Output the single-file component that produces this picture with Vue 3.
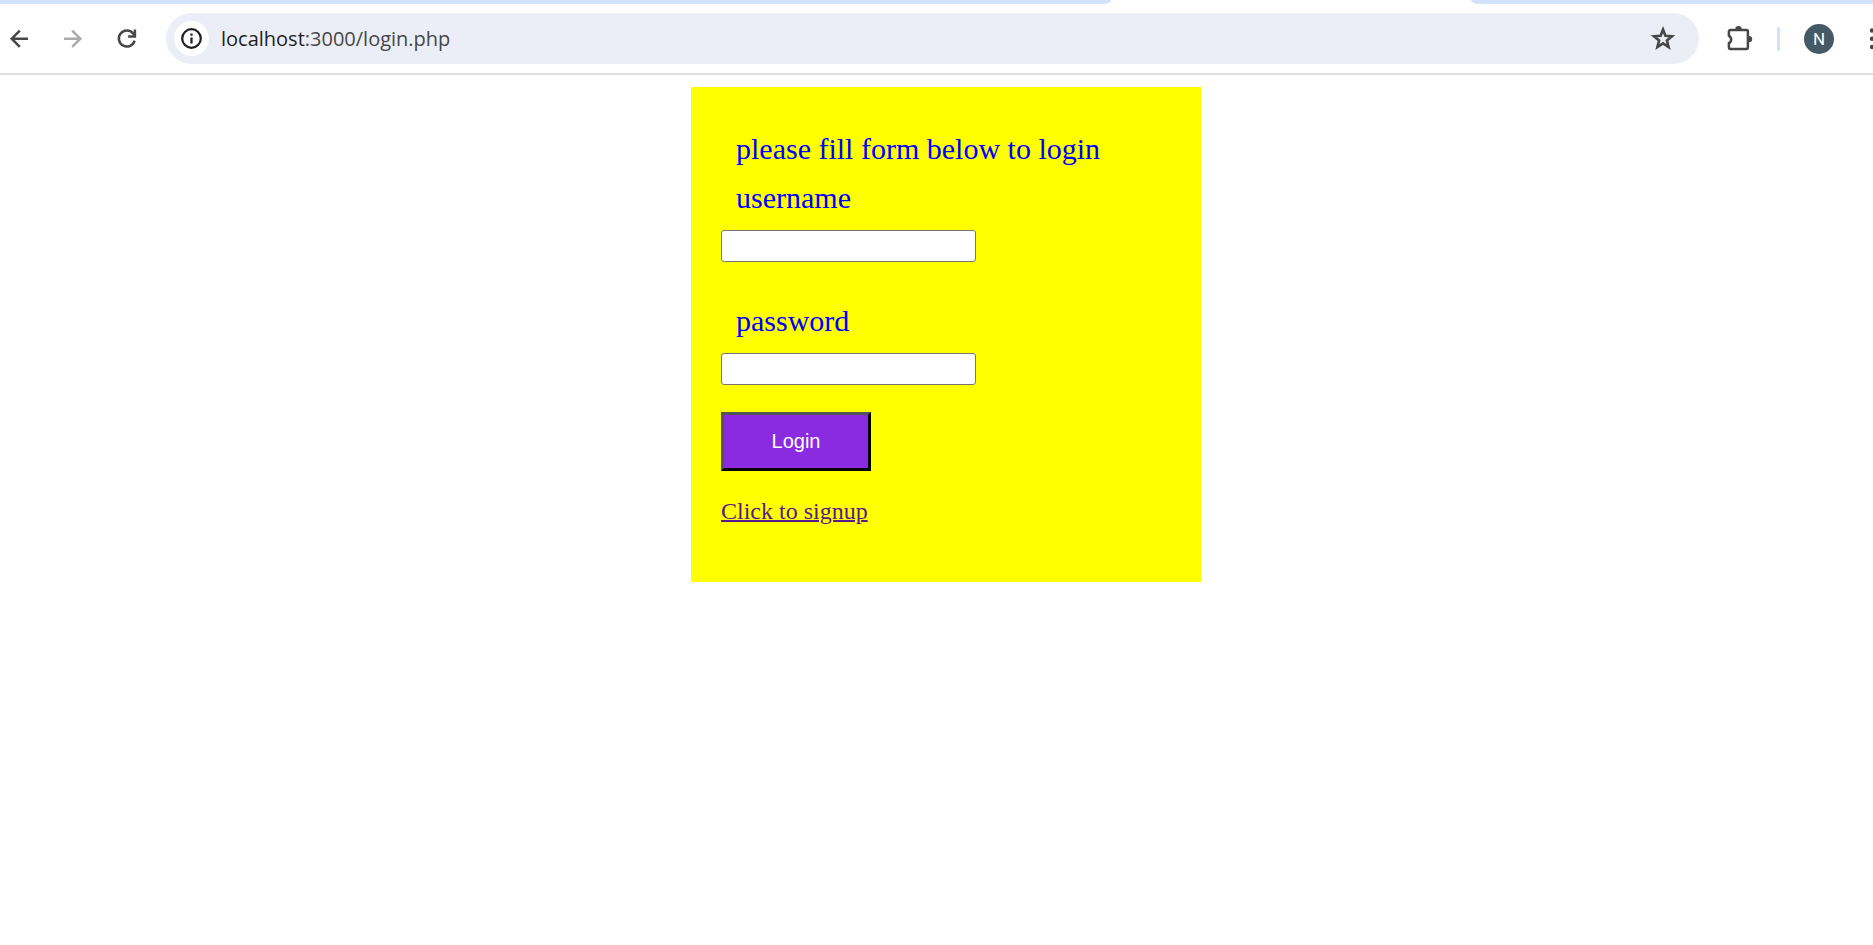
<script setup>
import { ref } from 'vue'

const username = ref('')
const password = ref('')
</script>

<template>
  <div class="window">
    <header class="chrome">
      <div class="tabs">
        <div class="tab-left"></div>
        <div class="tab-right"></div>
      </div>
      <div class="toolbar">
        <nav class="nav" aria-label="Navigation">
          <button type="button" class="icon-btn" aria-label="Back">
            <svg viewBox="0 0 24 24" width="24" height="24" fill="none" stroke="#474747" stroke-width="2.5">
              <path d="M21 11.7H5M12.8 3.6 4.7 11.7l8.1 8.1" />
            </svg>
          </button>
          <button type="button" class="icon-btn" aria-label="Forward">
            <svg viewBox="0 0 24 24" width="24" height="24" fill="none" stroke="#ababab" stroke-width="2.5">
              <path d="M3 11.7h16M11.2 3.6l8.1 8.1-8.1 8.1" />
            </svg>
          </button>
          <button type="button" class="icon-btn" aria-label="Reload">
            <svg viewBox="0 0 24 24" width="24" height="24" fill="none" stroke="#474747" stroke-width="2.5">
              <path d="M19.6 13.6A8 8 0 1 1 18 6.4L20 8.8" />
              <path d="M19.9 2.6v6.9h-6.8" />
            </svg>
          </button>
        </nav>
        <div class="omnibox">
          <button type="button" class="info" aria-label="Site information">
            <svg viewBox="0 0 21 21" width="21" height="21" fill="none" stroke="#1f1f1f">
              <circle cx="10.5" cy="10.5" r="9.3" stroke-width="2.2" />
              <path d="M10.5 9.4v6M10.5 5.4v2.3" stroke-width="2.2" />
            </svg>
          </button>
          <div class="url"><span class="host">localhost</span>:3000/login.php</div>
          <button type="button" class="icon-btn" aria-label="Bookmark">
            <svg viewBox="0 0 26 26" width="26" height="26" fill="none" stroke="#474747" stroke-width="2.6">
              <path d="M13 3.6l2.4 6.1 6.6.5-5.1 4.2 1.7 6.6L13 17.4 7.4 21l1.7-6.6L4 10.2l6.6-.5z" />
            </svg>
          </button>
        </div>
        <button type="button" class="icon-btn ext" aria-label="Extensions">
          <svg viewBox="0 0 28 28" width="28" height="28">
            <path
              d="M4.5 4.9h15.8a1.6 1.6 0 0 1 1.6 1.6v15.8a1.6 1.6 0 0 1-1.6 1.6H4.5a1.6 1.6 0 0 1-1.6-1.6V18a4 4 0 0 0 0-7.2V6.5a1.6 1.6 0 0 1 1.6-1.6z"
              fill="none"
              stroke="#474747"
              stroke-width="2.5"
            />
            <path d="M9.3 4.2a3.2 3.2 0 0 1 6.4 0zM23 10.9a3.2 3.2 0 0 1 0 6.4z" fill="#474747" />
          </svg>
        </button>
        <div class="divider"></div>
        <button type="button" class="avatar" aria-label="Profile">N</button>
        <button type="button" class="icon-btn" aria-label="Menu">
          <svg viewBox="0 0 16 24" width="16" height="24" fill="#474747">
            <circle cx="8" cy="3.5" r="2.2" />
            <circle cx="8" cy="11.8" r="2.2" />
            <circle cx="8" cy="20" r="2.2" />
          </svg>
        </button>
      </div>
    </header>

    <main class="page">
      <form class="card" @submit.prevent>
        <p class="caption">please fill form below to login</p>
        <label class="caption" for="username">username</label>
        <input id="username" v-model="username" class="field" type="text" />
        <label class="caption second" for="password">password</label>
        <input id="password" v-model="password" class="field" type="password" />
        <button class="login" type="submit">Login</button>
        <a class="signup" href="#signup">Click to signup</a>
      </form>
    </main>
  </div>
</template>

<style>
body {
  margin: 0;
  background: #fff;
}
</style>

<style scoped>
.window {
  overflow: hidden;
}
.chrome {
  border-bottom: 2px solid #e0e0e0;
}
.tabs {
  display: flex;
  height: 4px;
  gap: 360px;
}
.tab-left {
  flex: 1;
  background: #d3e3fd;
  border-bottom-right-radius: 8px 4px;
}
.tab-right {
  width: 402px;
  background: #d3e3fd;
  border-bottom-left-radius: 8px 4px;
}
.toolbar {
  display: flex;
  align-items: center;
  padding: 9px 0 9px 7px;
  margin-right: -7px;
}
.nav {
  display: flex;
  gap: 30px;
}
button {
  flex-shrink: 0;
}
.icon-btn {
  display: flex;
  padding: 0;
  border: 0;
  background: none;
}
.omnibox {
  flex: 1;
  display: flex;
  align-items: center;
  height: 51px;
  box-sizing: border-box;
  margin-left: 27px;
  padding: 0 23px 0 8px;
  border-radius: 26px;
  background: #ebeef7;
}
.info {
  display: flex;
  align-items: center;
  justify-content: center;
  width: 35px;
  height: 35px;
  padding: 0;
  border: 0;
  border-radius: 50%;
  background: #fff;
}
.url {
  flex: 1;
  margin-left: 12px;
  font: 20px/30px "Open Sans", "Noto Sans", sans-serif;
  color: #474747;
}
.host {
  color: #1f1f1f;
}
.ext {
  margin-left: 27px;
}
.divider {
  width: 3px;
  height: 24px;
  margin: 0 24px 0 23px;
  border-radius: 1px;
  background: #d3e3fd;
}
.avatar {
  width: 30px;
  height: 30px;
  margin-right: 30px;
  padding: 0;
  border: 0;
  border-radius: 50%;
  background: #455a64;
  color: #fff;
  font: 17px/30px Roboto, sans-serif;
}
.page {
  display: flex;
  justify-content: center;
  padding: 12px 0 12px 19px;
}
.card {
  display: flex;
  flex-direction: column;
  align-items: flex-start;
  width: 510px;
  box-sizing: border-box;
  padding: 30px 30px 57px;
  background: #ff0;
}
.caption {
  margin: 15px 15px 0;
  font: 30px/34px "Liberation Serif", "Times New Roman", serif;
  color: #00f;
}
.second {
  margin-top: 42px;
}
.field {
  width: 255px;
  height: 32px;
  box-sizing: border-box;
  margin: 15px 0 0;
  padding: 2px 4px;
  border: 1px solid #767676;
  border-radius: 3px;
  background: #fff;
  font: 20px "Liberation Sans", Arial, sans-serif;
}
.login {
  width: 150px;
  height: 59px;
  margin: 27px 0 26px;
  padding: 0;
  border: 3px outset #000;
  background: #8a2be2;
  color: #fff;
  font: 20px "Liberation Sans", Arial, sans-serif;
}
.signup {
  font: 24px/28px "Liberation Serif", "Times New Roman", serif;
  color: #551a8b;
  text-decoration: underline;
  text-decoration-thickness: 2px;
}
</style>
